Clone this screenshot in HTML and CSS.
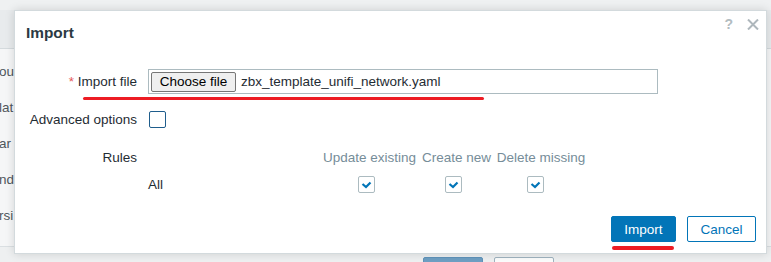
FILE: index.html
```html
<!DOCTYPE html>
<html>
<head>
<meta charset="utf-8">
<title>Import</title>
<link rel="stylesheet" href="styles.css">
</head>
<body>
<div class="page">
  <div class="top-strip"></div>
  <div class="band"></div>
  <div class="filter">
    <div class="frow">ou</div>
    <div class="frow">lat</div>
    <div class="frow">ar</div>
    <div class="frow">nd</div>
    <div class="frow">rsi</div>
  </div>
  <div class="page-foot">
    <span class="pbtn pbtn-primary"></span>
    <span class="pbtn"></span>
  </div>
</div>

<div class="dialog">
  <div class="dlg-head">
    <h4 class="dlg-title">Import</h4>
    <div class="dlg-tools">
      <span class="help">?</span>
      <svg class="close" width="12" height="11" viewBox="0 0 12 11"><path d="M1 0.5 L11 10.5 M11 0.5 L1 10.5" stroke="#aeb7bc" stroke-width="2" fill="none"/></svg>
    </div>
  </div>

  <div class="form">
    <div class="lbl"><span class="req">*</span> Import file</div>
    <div class="ctl">
      <div class="filebox">
        <span class="filebtn">Choose file</span>
        <span class="filename">zbx_template_unifi_network.yaml</span>
      </div>
    </div>

    <div class="lbl">Advanced options</div>
    <div class="ctl"><span class="cb cb-focus"></span></div>

    <div class="lbl lbl-top">Rules</div>
    <div class="rules">
      <div class="rh"></div>
      <div class="rh">Update existing</div>
      <div class="rh">Create new</div>
      <div class="rh">Delete missing</div>
      <div class="rd rd-name">All</div>
      <div class="rd"><span class="cb cb-on"><svg width="15" height="15" viewBox="0 0 15 15"><path d="M3.5 7 L7 10 L11.5 5.5" stroke="#0275b8" stroke-width="2.2" fill="none"/></svg></span></div>
      <div class="rd"><span class="cb cb-on"><svg width="15" height="15" viewBox="0 0 15 15"><path d="M3.5 7 L7 10 L11.5 5.5" stroke="#0275b8" stroke-width="2.2" fill="none"/></svg></span></div>
      <div class="rd"><span class="cb cb-on cb-last"><svg width="15" height="15" viewBox="0 0 15 15"><path d="M3.5 7 L7 10 L11.5 5.5" stroke="#0275b8" stroke-width="2.2" fill="none"/></svg></span></div>
    </div>
  </div>

  <div class="dlg-foot">
    <button class="btn btn-primary">Import</button>
    <button class="btn btn-alt">Cancel</button>
  </div>

  <span class="mark mark-file"></span>
</div>
</body>
</html>
```

FILE: styles.css
```css
html, body {
  margin: 0;
  padding: 0;
}
body {
  width: 771px;
  height: 262px;
  overflow: hidden;
  position: relative;
  font-family: "Liberation Sans", Arial, sans-serif;
  font-size: 13.5px;
  color: #1f2c33;
  background: #f3f4f5;
}

/* background page */
.page {
  width: 771px;
  height: 262px;
  overflow: hidden;
}
.top-strip {
  height: 10px;
  background: #eff1f2;
}
.band {
  height: 38px;
  background: #e8ebed;
  border-bottom: 1px solid #d4dadd;
}
.filter {
  padding: 5px 0 12px;
  border-bottom: 1px solid #dadfe2;
  background: #f5f6f7;
}
.frow {
  height: 36px;
  line-height: 36px;
  color: #4f575c;
  margin-left: -1px;
}
.page-foot {
  display: flex;
  gap: 11px;
  padding: 10px 0 0 423px;
  background: #eef0f1;
  height: 20px;
}
.pbtn {
  width: 60px;
  height: 26px;
  border: 1px solid #9fb3bf;
  border-radius: 2px;
  background: #fbfcfc;
  box-sizing: border-box;
}
.pbtn-primary {
  background: #6e9fc3;
  border-color: #5f93ba;
}

/* dialog */
.dialog {
  position: absolute;
  left: 14px;
  top: 10px;
  width: 753px;
  height: 244px;
  box-sizing: border-box;
  background: #fff;
  border: 1px solid #d3dadd;
  box-shadow: 0 0 9px rgba(0, 0, 0, 0.14);
}
.dlg-head {
  display: flex;
  justify-content: space-between;
  align-items: flex-start;
  padding: 13px 11px 0 11px;
}
.dlg-title {
  margin: 0;
  font-size: 15.4px;
  line-height: 18px;
  font-weight: bold;
  color: #2b3a43;
}
.dlg-tools {
  display: flex;
  align-items: center;
  gap: 14px;
  margin-top: -5px;
  margin-right: -4px;
}
.help {
  font-size: 14px;
  line-height: 11px;
  font-weight: bold;
  color: #b3bcc1;
}
.close {
  display: block;
}

.form {
  display: grid;
  grid-template-columns: 111px 1fr;
  grid-template-rows: 25px 25px auto;
  column-gap: 11px;
  row-gap: 13px;
  padding: 0 11px;
  margin-top: 27px;
}
.lbl {
  text-align: right;
  align-self: center;
  white-space: nowrap;
}
.lbl-top {
  align-self: start;
  line-height: 26px;
}
.req {
  color: #e45959;
}
.ctl {
  display: flex;
  align-items: center;
}
.filebox {
  width: 510px;
  height: 25px;
  box-sizing: border-box;
  border: 1px solid #acbbc0;
  display: flex;
  align-items: center;
  padding-left: 2px;
}
.filebtn {
  width: 85px;
  height: 20px;
  box-sizing: border-box;
  border: 1px solid #767676;
  border-radius: 2px;
  background: #efefef;
  color: #000;
  text-align: center;
  line-height: 18px;
}
.filename {
  margin-left: 5px;
  color: #1f2c33;
}

.cb {
  width: 17px;
  height: 17px;
  box-sizing: border-box;
  border: 1px solid #acbbc0;
  border-radius: 2px;
  background: #fff;
  display: inline-flex;
  align-items: center;
  justify-content: center;
}
.cb-focus {
  border-color: #1f5d8c;
  margin-left: 1px;
}
.cb-on {
  margin-right: 6px;
}
.cb-last {
  margin-right: 11px;
}

.rules {
  display: grid;
  grid-template-columns: 172px 99px 75px 94px;
  grid-template-rows: 26px 26px;
}
.rh {
  line-height: 26px;
  text-align: center;
  color: #768d99;
  white-space: nowrap;
}
.rd {
  display: flex;
  align-items: center;
  justify-content: center;
}
.rd-name {
  justify-content: flex-start;
}

.dlg-foot {
  display: flex;
  justify-content: flex-end;
  gap: 11px;
  padding: 0 10px 0 0;
  margin-top: 19px;
}
.btn {
  height: 26px;
  box-sizing: border-box;
  border-radius: 2px;
  font-family: "Liberation Sans", Arial, sans-serif;
  font-size: 13.5px;
  padding: 0;
  position: relative;
}
.btn-primary {
  width: 65px;
  background: #0275b8;
  border: 1px solid #0275b8;
  color: #fff;
}
.btn-primary::after {
  content: "";
  position: absolute;
  left: 0;
  right: 1px;
  top: 29px;
  height: 4px;
  border-radius: 2px;
  background: #ed1c24;
}
.btn-alt {
  width: 69px;
  background: #fff;
  border: 1px solid #0275b8;
  color: #0275b8;
}

.mark {
  position: absolute;
  background: #ed1c24;
  border-radius: 2px;
}
.mark-file {
  left: 68px;
  top: 86px;
  width: 401px;
  height: 3px;
}
```
